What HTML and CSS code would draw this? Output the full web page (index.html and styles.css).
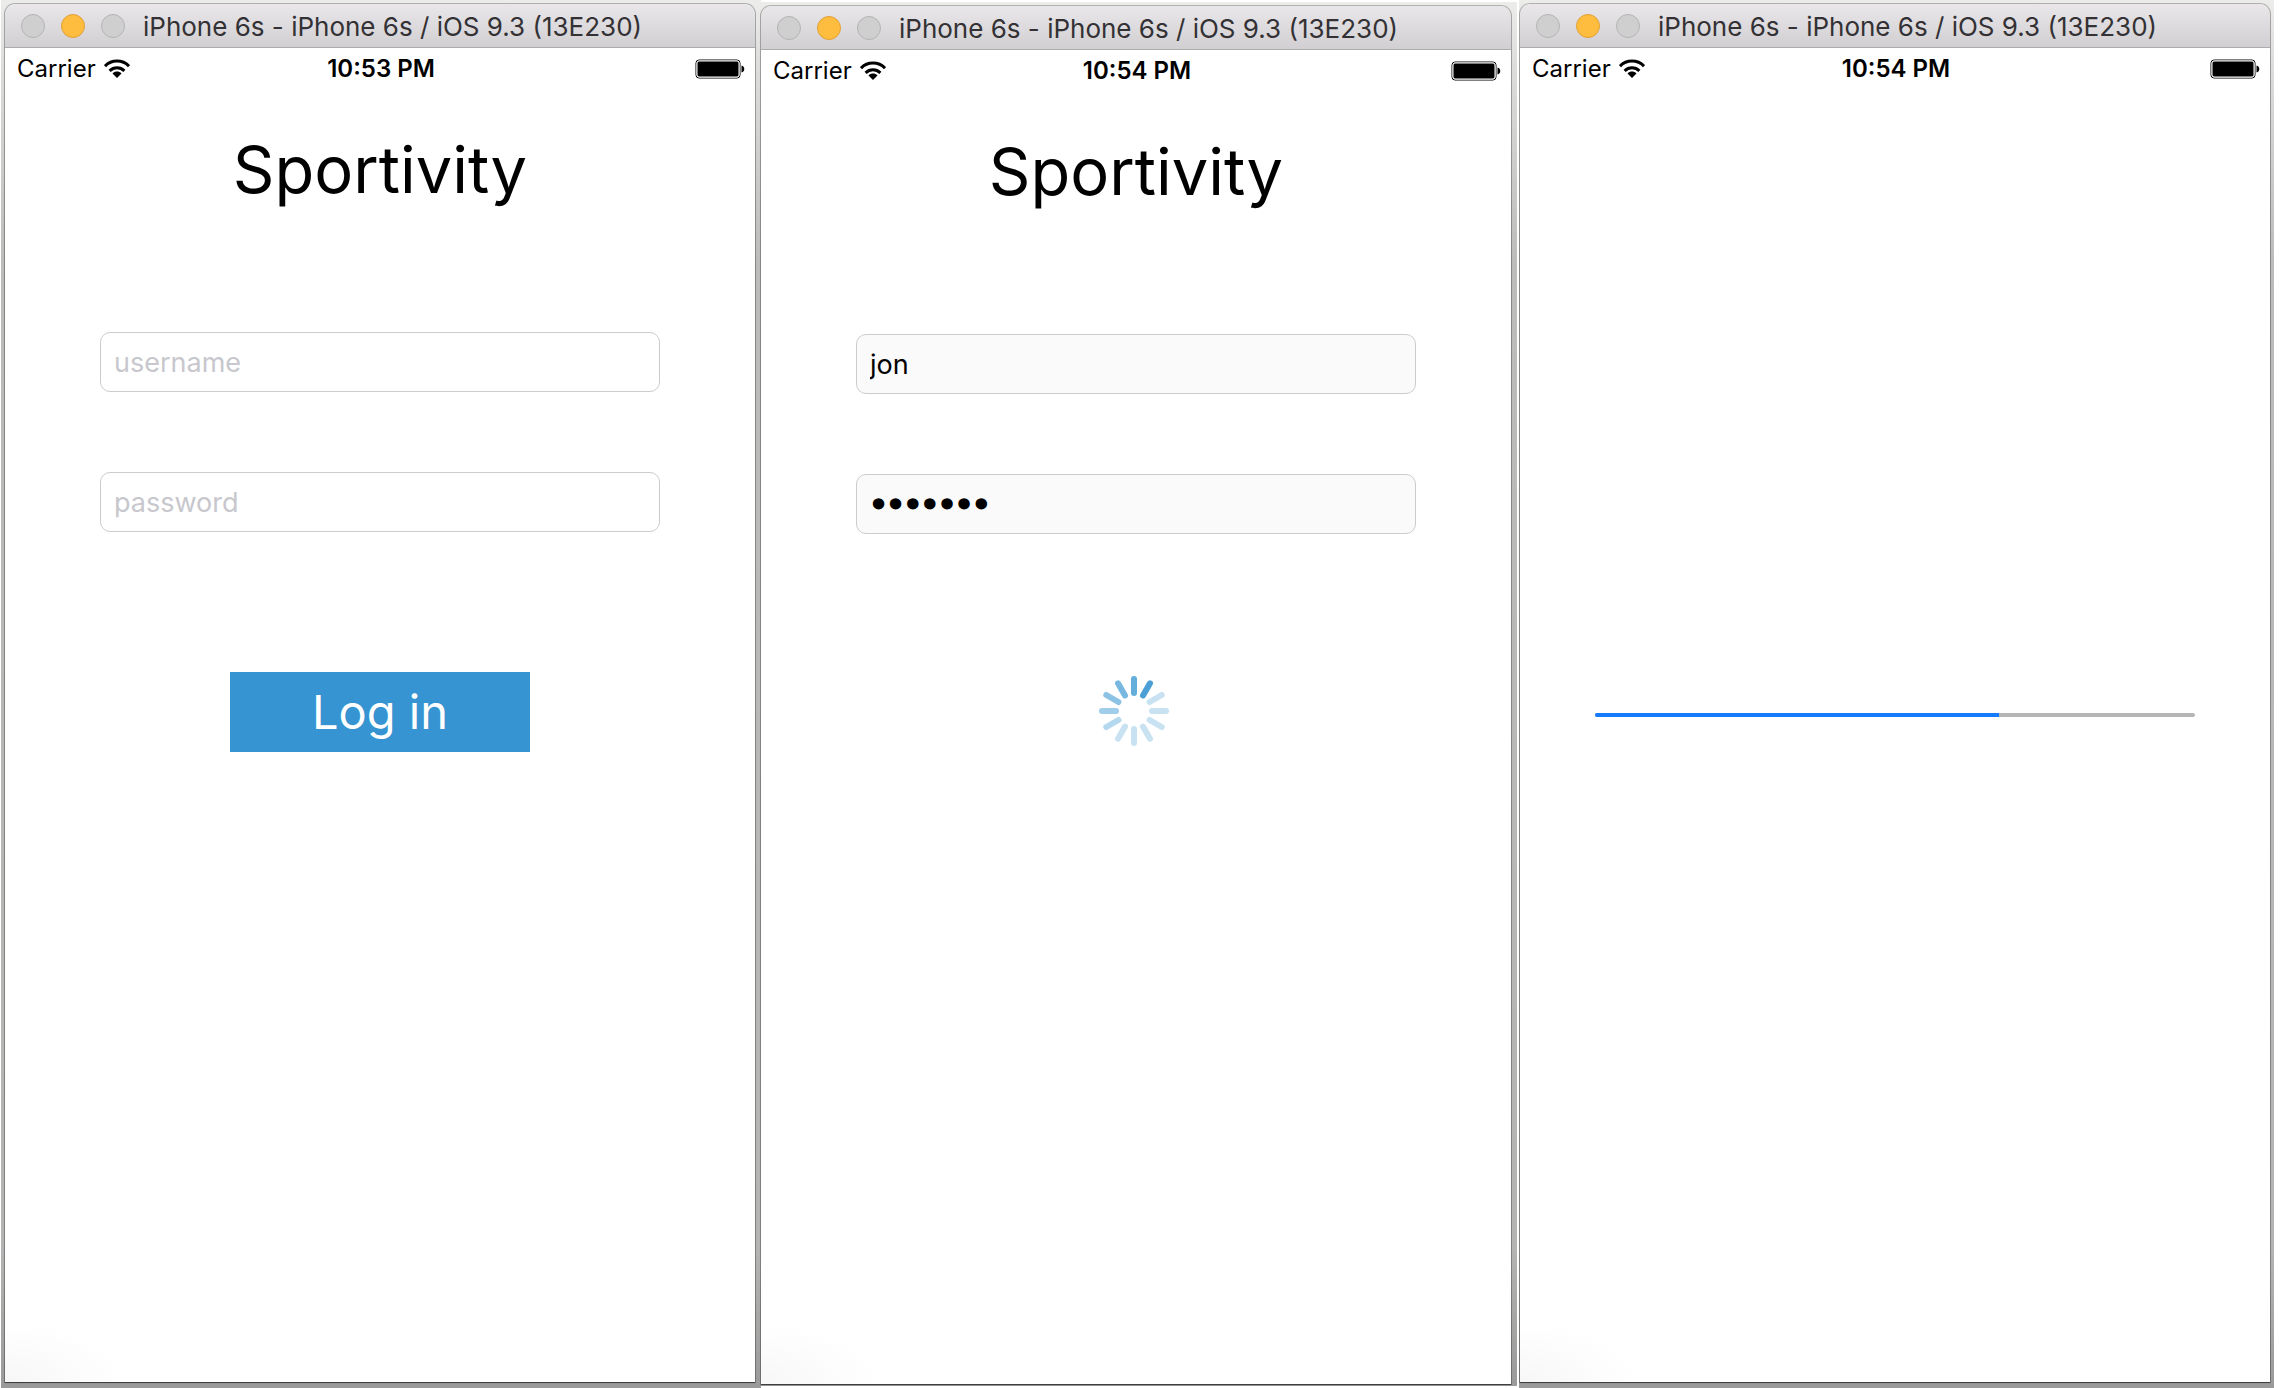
FILE: index.html
```html
<!DOCTYPE html>
<html lang="en">
<head>
<meta charset="utf-8">
<meta name="viewport" content="width=device-width, initial-scale=1">
<title>Sportivity</title>
<link rel="stylesheet" href="styles.css">
</head>
<body>
<svg class="sprites" aria-hidden="true">
  <symbol id="wifi" viewBox="0 0 26 20">
    <g fill="none" stroke="#000" stroke-width="3">
      <path d="M1 7.2C7.500 .4 18.500 .4 25 7.200"/>
      <path d="M5.600 11.800C9.800 7.800 16.200 7.800 20.400 11.800"/>
    </g>
    <path d="M8.500 14.400C11 12 15 12 17.500 14.400L13 19Z"/>
  </symbol>
  <symbol id="battery" viewBox="0 0 50 20">
    <rect x="1" y="1" width="44" height="18" rx="3" fill="#fff" stroke="#000"/>
    <rect x="2" y="2" width="42" height="16" rx="2"/>
    <rect x="2" y="2" width="42" height="16" rx="2" fill="none" stroke="#fff"/>
    <path d="M46.500 6.500C50.200 7 50.200 13 46.500 13.500Z"/>
  </symbol>
</svg>
<main class="gallery">
  <section class="shot shot-first">
    <div class="window">
      <header class="titlebar">
        <div class="lights"><span class="light"></span><span class="light light-on"></span><span class="light"></span></div>
        <h2 class="window-title">iPhone 6s - iPhone 6s / iOS 9.3 (13E230)</h2>
      </header>
      <div class="screen">
        <div class="status">
          <span class="carrier">Carrier <svg class="wifi"><use href="#wifi"/></svg></span>
          <time class="clock">10:53 PM</time>
          <svg class="battery"><use href="#battery"/></svg>
        </div>
        <form class="login">
          <h1 class="brand">Sportivity</h1>
          <input class="field" type="text" placeholder="username" aria-label="username">
          <input class="field" type="password" placeholder="password" aria-label="password">
          <div class="action"><button class="submit" type="button">Log in</button></div>
        </form>
      </div>
    </div>
  </section>
  <section class="shot shot-second">
    <div class="window">
      <header class="titlebar">
        <div class="lights"><span class="light"></span><span class="light light-on"></span><span class="light"></span></div>
        <h2 class="window-title">iPhone 6s - iPhone 6s / iOS 9.3 (13E230)</h2>
      </header>
      <div class="screen">
        <div class="status">
          <span class="carrier">Carrier <svg class="wifi"><use href="#wifi"/></svg></span>
          <time class="clock">10:54 PM</time>
          <svg class="battery"><use href="#battery"/></svg>
        </div>
        <form class="login">
          <h1 class="brand">Sportivity</h1>
          <input class="field field-busy" type="text" value="jon" aria-label="username">
          <input class="field field-busy field-masked" type="password" value="sportif" aria-label="password">
          <div class="action">
            <svg class="spinner" viewBox="0 0 74 76" role="img" aria-label="Logging in">
              <g stroke-width="6" stroke-linecap="round">
                <path d="M35 3V17" stroke="#63aedb"/>
                <path d="M35 3V17" stroke="#4c9fd5" transform="rotate(30 35 35)"/>
                <path d="M35 3V17" stroke="#c8e2f2" transform="rotate(60 35 35)"/>
                <path d="M35 3V17" stroke="#c8e2f2" transform="rotate(90 35 35)"/>
                <path d="M35 3V17" stroke="#c8e2f2" transform="rotate(120 35 35)"/>
                <path d="M35 3V17" stroke="#c8e2f2" transform="rotate(150 35 35)"/>
                <path d="M35 3V17" stroke="#c8e2f2" transform="rotate(180 35 35)"/>
                <path d="M35 3V17" stroke="#c8e2f2" transform="rotate(210 35 35)"/>
                <path d="M35 3V17" stroke="#b4d8ee" transform="rotate(240 35 35)"/>
                <path d="M35 3V17" stroke="#a0cde9" transform="rotate(270 35 35)"/>
                <path d="M35 3V17" stroke="#8cc3e5" transform="rotate(300 35 35)"/>
                <path d="M35 3V17" stroke="#78b8e0" transform="rotate(330 35 35)"/>
              </g>
            </svg>
          </div>
        </form>
      </div>
    </div>
  </section>
  <section class="shot shot-third">
    <div class="window">
      <header class="titlebar">
        <div class="lights"><span class="light"></span><span class="light light-on"></span><span class="light"></span></div>
        <h2 class="window-title">iPhone 6s - iPhone 6s / iOS 9.3 (13E230)</h2>
      </header>
      <div class="screen">
        <div class="status">
          <span class="carrier">Carrier <svg class="wifi"><use href="#wifi"/></svg></span>
          <time class="clock">10:54 PM</time>
          <svg class="battery"><use href="#battery"/></svg>
        </div>
        <div class="loading"><progress class="bar" max="600" value="404" aria-label="Loading"></progress></div>
      </div>
    </div>
  </section>
</main>
</body>
</html>
```
FILE: styles.css
```css
* { box-sizing: border-box; }

body {
  margin: 0;
  background: #fff;
  color: #000;
  font-family: Inter, "Liberation Sans", sans-serif;
}

.sprites {
  position: absolute;
  width: 0;
  height: 0;
}

.gallery {
  display: flex;
  min-height: 100vh;
  padding-right: 6px;
  padding-left: 1px;
}

/* Each shot is a simulator window on a strip of desktop. */
.shot {
  box-sizing: content-box;
  display: flex;
  flex: 1 1 0;
  min-width: 0;
  background: linear-gradient(#ececea 0, #dededc 60px, #bcbcba 260px, #b4b4b2 90%, #9a9a9a 100%);
}

.shot-first { padding: 4px 6px 6px 4px; }
.shot-second { margin: 2px 2px 2px 0; padding: 4px 6px 2px 0; }
.shot-third { padding: 4px 4px 6px 1px; }

.window {
  display: flex;
  flex: 1;
  flex-direction: column;
  min-width: 0;
  border-radius: 10px 10px 0 0;
  box-shadow: 0 0 0 1px rgba(0, 0, 0, .25), 0 1px 1px rgba(0, 0, 0, .5);
}

.titlebar {
  display: flex;
  align-items: center;
  gap: 18px;
  height: 44px;
  padding: 0 16px;
  border-bottom: 1px solid #aeacaf;
  border-radius: 10px 10px 0 0;
  background: linear-gradient(#e9e7ea, #d1cfd2);
}

.lights {
  display: flex;
  gap: 16px;
}

.light {
  width: 24px;
  height: 24px;
  border: 1px solid #b4b4b4;
  border-radius: 50%;
  background: #cfcfcf;
}

.light-on {
  border-color: #e0a036;
  background: #ffbd40;
}

.window-title {
  margin: 0;
  padding-top: 2px;
  color: #333134;
  font-size: 26px;
  font-weight: 400;
  line-height: 32px;
  white-space: nowrap;
}

.screen {
  display: flex;
  flex: 1;
  flex-direction: column;
  background: radial-gradient(ellipse 120px 60px at 0 100%, #f7f7f7, #fff) #fff;
}

.status {
  display: grid;
  grid-template-columns: 1fr auto 1fr;
  align-items: center;
  height: 40px;
  padding: 2px 10px 0 12px;
  font-size: 24px;
  line-height: 28px;
}

.carrier {
  display: flex;
  align-items: center;
  gap: 8px;
}

.wifi {
  width: 26px;
  height: 20px;
}

.clock { font-weight: 600; }

.battery {
  justify-self: end;
  width: 50px;
  height: 20px;
}

.login {
  display: flex;
  flex-direction: column;
  gap: 80px;
  width: 560px;
  max-width: 100%;
  margin: 40px auto 0;
}

.brand {
  margin: 0 0 40px;
  font-size: 65px;
  font-weight: 400;
  line-height: 84px;
  text-align: center;
}

.field {
  width: 100%;
  height: 60px;
  padding: 0 13px;
  border: 1px solid #cccccf;
  border-radius: 10px;
  background: #fff;
  color: #000;
  font: 27px/36px Inter, "Liberation Sans", sans-serif;
}

.field::placeholder { color: #c7c7cd; }

.field-busy { background: #fafafa; }

/* The stroke fattens the masking dots. */
.field-masked {
  font: 29px/36px "DejaVu Sans", sans-serif;
  -webkit-text-stroke: 3px #000;
}

.action {
  display: flex;
  align-items: center;
  justify-content: center;
  height: 80px;
  margin-top: 60px;
}

.submit {
  width: 300px;
  height: 80px;
  border: 0;
  background: #3594d1;
  color: #fff;
  font: 47px/60px Inter, "Liberation Sans", sans-serif;
}

.spinner {
  width: 74px;
  height: 76px;
}

.loading {
  display: flex;
  flex: 1;
  align-items: center;
  justify-content: center;
  padding-bottom: 40px;
}

.bar {
  width: 80%;
  height: 4px;
  border: 0;
  border-radius: 2px;
  overflow: hidden;
  background: #b6b6b6;
  appearance: none;
}

.bar::-webkit-progress-bar { background: #b6b6b6; }
.bar::-webkit-progress-value { background: #157afb; }
.bar::-moz-progress-bar { background: #157afb; }
```
